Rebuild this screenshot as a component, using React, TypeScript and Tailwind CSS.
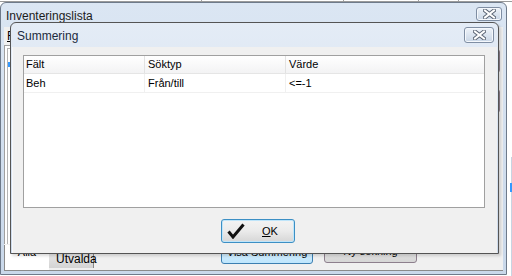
import React from 'react';

const font = { fontFamily: '"Liberation Sans", Arial, sans-serif' };

const CloseGlyph = () => (
    <svg width="13" height="10" viewBox="0 0 13 10">
        <path d="M2 1.5 L11 8.5 M11 1.5 L2 8.5" stroke="#5b6574" strokeWidth="4" strokeLinecap="square" />
        <path d="M2 1.5 L11 8.5 M11 1.5 L2 8.5" stroke="#ffffff" strokeWidth="2" strokeLinecap="square" />
    </svg>
);

const CloseButton = ({ w, h }: { w: string; h: string }) => (
    <div className={`${w} ${h} flex items-center justify-center rounded-[3px] border border-[#7f8ea3] bg-gradient-to-b from-[#eef3f9] to-[#c9d6e6] shadow-[inset_0_0_0_1px_#f5f8fc]`}>
        <CloseGlyph />
    </div>
);

const BackWindow = () => (
    <div className="absolute left-0 top-[2px] w-[507px] h-[273px] flex flex-col border border-[#6e7a8a] rounded-t-[6px] bg-gradient-to-b from-[#dbe6f3] to-[#c9d8ea] overflow-hidden">
        {/* title */}
        <div className="h-[24px] shrink-0 flex items-start">
            <span className="pl-[5px] pt-[6px] text-[12px] leading-[14px] text-[#1b1b1b]">Inventeringslista</span>
            <div className="ml-auto mr-[4px] mt-[4px]">
                <CloseButton w="w-[26px]" h="h-[14px]" />
            </div>
        </div>
        <div className="flex-1 mx-[3px] mb-[3px] bg-[#f0f0f0] flex flex-col">
            {/* menu */}
            <div className="h-[18px] shrink-0 flex items-center pl-[3px] text-[12px] text-black">
                <span><span className="underline">F</span>il</span>
            </div>
            {/* middle */}
            <div className="flex-1 flex">
                <div className="flex-1 border-l border-t border-[#a0a0a0] bg-white pl-[2px] pt-[2px] flex">
                    <div className="flex-1 border-l border-t border-[#b4b4b4] flex flex-col">
                        <div className="h-[13px]" />
                        <div className="h-[5px] w-[40px] bg-[#3399ff]" />
                    </div>
                </div>
                <div className="w-[90px] flex flex-col gap-[16px] pt-[4px] pl-[6px] pr-[3px]">
                    <div className="h-[24px] rounded-[3px] border border-[#8d7f8d] bg-gradient-to-b from-[#f2f2f2] to-[#d6d6d6]" />
                    <div className="h-[24px] rounded-[3px] border border-[#8d7f8d] bg-gradient-to-b from-[#f2f2f2] to-[#d6d6d6]" />
                </div>
            </div>
            {/* bottom */}
            <div className="h-[27px] shrink-0 flex items-end border-b border-[#8a8a8a]">
                <div className="w-[45px] h-[25px] border-l border-[#8a8a8a] bg-white flex justify-center text-[11px] leading-[12px] pt-[1px] text-black">Alla</div>
                <div className="w-[45px] h-[20px] mb-[2px] border-r border-[#8a8a8a] bg-gradient-to-b from-[#f0f0f0] to-[#d3d3d3] text-[12px] leading-[14px] pt-[4px] pl-[7px] text-black">Utvalda</div>
                <div className="ml-[127px] mb-[6px] w-[92px] h-[24px] rounded-[3px] border border-[#3c7fb1] bg-gradient-to-b from-[#eaf6fd] to-[#bee6fd] flex items-center justify-center text-[11px] text-black">Visa Summering</div>
                <div className="ml-[11px] mb-[7px] w-[93px] h-[24px] rounded-[3px] border border-[#8d7f8d] bg-gradient-to-b from-[#f2f2f2] to-[#d6d6d6] flex items-center justify-center text-[11px] text-black">Ny sökning</div>
            </div>
        </div>
    </div>
);

const rows = [{ falt: 'Beh', soktyp: 'Från/till', varde: '<=-1' }];

const Dialog = () => (
    <div className="absolute left-[10px] top-[22px] w-[489px] h-[232px] flex flex-col border border-[#545454] rounded-t-[6px] bg-gradient-to-b from-[#e4ecf6] to-[#cbd9eb] shadow-[2px_2px_3px_rgba(0,0,0,0.15)]">
        <div className="h-[24px] shrink-0 flex items-start">
            <span className="pl-[6px] pt-[6px] text-[12px] leading-[14px] text-[#1b2a3d]">Summering</span>
            <div className="ml-auto mr-[4px] mt-[4px]">
                <CloseButton w="w-[30px]" h="h-[16px]" />
            </div>
        </div>
        <div className="flex-1 mx-[1px] mb-[0px] bg-[#f0f0f0] flex flex-col pl-[10px] pr-[12px] pt-[8px] pb-[9px] border-l border-[#f6f8fb]">
            <div className="h-[153px] border border-[#a0a0a0] bg-white flex flex-col">
                <div className="h-[18px] flex border-b border-[#e5e5e5] bg-gradient-to-b from-white to-[#f3f3f4] text-[11px] text-black">
                    <div className="w-[121px] pl-[2px] flex items-center border-r border-[#e2e2e2]">Fält</div>
                    <div className="w-[141px] pl-[3px] flex items-center border-r border-[#e2e2e2]">Söktyp</div>
                    <div className="flex-1 pl-[3px] flex items-center">Värde</div>
                </div>
                {rows.map((r) => (
                    <div key={r.falt} className="h-[19px] flex border-b border-[#f0f0f0] text-[11px] text-black">
                        <div className="w-[121px] pl-[2px] flex items-center border-r border-[#f0f0f0]">{r.falt}</div>
                        <div className="w-[141px] pl-[3px] flex items-center border-r border-[#f0f0f0]">{r.soktyp}</div>
                        <div className="flex-1 pl-[3px] flex items-center">{r.varde}</div>
                    </div>
                ))}
            </div>
            <div className="mt-[11px] ml-[198px] w-[74px] h-[24px] rounded-[3px] border border-[#3c8fc4] bg-gradient-to-b from-[#f3f3f3] via-[#ebebeb] to-[#d6d6d6] shadow-[inset_0_0_0_1px_#bfe5fa] flex items-center">
                <svg width="18" height="16" viewBox="0 0 18 16" className="ml-[5px]">
                    <path d="M1.5 8.5 L6 14 L16.5 1.5" stroke="#111" strokeWidth="3" fill="none" strokeLinejoin="miter" />
                </svg>
                <span className="ml-[17px] text-[11px] leading-[12px] text-black"><span className="underline">O</span>K</span>
            </div>
        </div>
    </div>
);

const App = () => {
    return (
        <div className="relative w-[512px] h-[276px] overflow-hidden bg-white" style={font}>
            {/* window behind, top strip */}
            <div className="h-[2px] flex border-b border-[#9a9a9a]">
                <div className="w-[202px] border-r border-[#a0a0a0]" />
                <div className="w-[142px] border-r border-[#a0a0a0]" />
                <div className="w-[75px] border-r border-[#a0a0a0]" />
                <div className="w-[40px] border-r border-[#a0a0a0]" />
            </div>
            <div className="absolute right-0 top-[157px] w-[1px] h-[119px] bg-[#c8d4e2]" />
            <div className="absolute right-0 top-[183px] w-[2px] h-[9px] bg-[#3399ff]" />
            <BackWindow />
            <Dialog />
        </div>
    );
};

export default App;
